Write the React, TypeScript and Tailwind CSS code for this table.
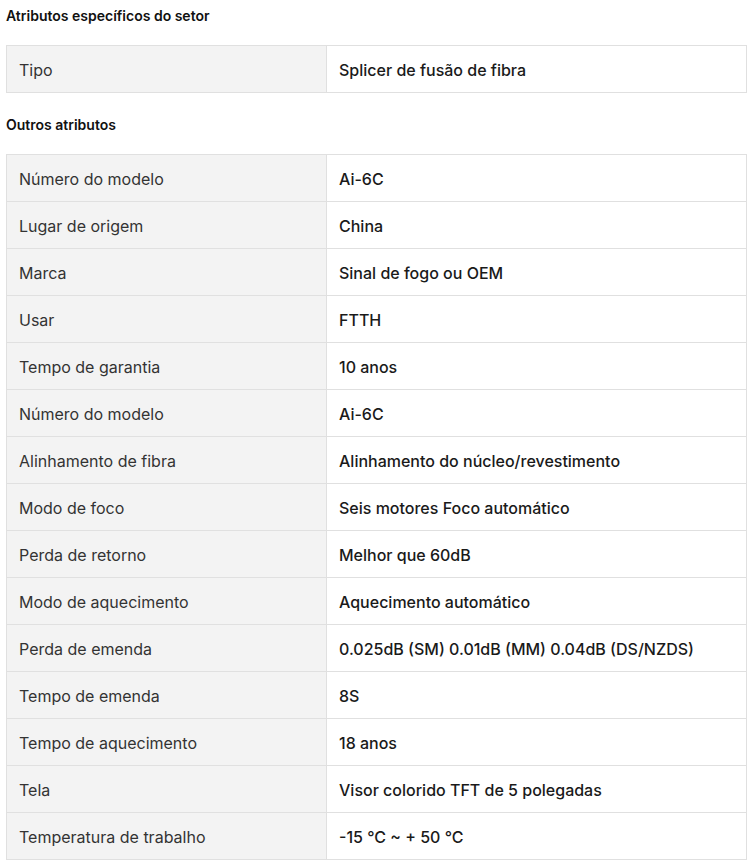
import React from "react";

const specific: [string, string][] = [["Tipo", "Splicer de fusão de fibra"]];
const others: [string, string][] = [
  ["Número do modelo", "Ai-6C"],
  ["Lugar de origem", "China"],
  ["Marca", "Sinal de fogo ou OEM"],
  ["Usar", "FTTH"],
  ["Tempo de garantia", "10 anos"],
  ["Número do modelo", "Ai-6C"],
  ["Alinhamento de fibra", "Alinhamento do núcleo/revestimento"],
  ["Modo de foco", "Seis motores Foco automático"],
  ["Perda de retorno", "Melhor que 60dB"],
  ["Modo de aquecimento", "Aquecimento automático"],
  ["Perda de emenda", "0.025dB (SM) 0.01dB (MM) 0.04dB (DS/NZDS)"],
  ["Tempo de emenda", "8S"],
  ["Tempo de aquecimento", "18 anos"],
  ["Tela", "Visor colorido TFT de 5 polegadas"],
  ["Temperatura de trabalho", "-15 °C ~ + 50 °C"],
];

function Table({ rows }: { rows: [string, string][] }) {
  return (
    <div className="w-[741px] border border-[#e0e0e0] border-b-0">
      {rows.map(([k, v], i) => (
        <div key={i} className="grid grid-cols-[320px_1fr] h-[47px] border-b border-[#e0e0e0]">
          <div className="bg-[#f3f3f3] border-r border-[#e0e0e0] flex items-center pl-[12px] pt-[1px] text-[16px] text-[#333]">
            {k}
          </div>
          <div className="bg-white flex items-center pl-[12px] pt-[1px] text-[16px] font-medium text-[#1a1a1a]">{v}</div>
        </div>
      ))}
    </div>
  );
}

export default function App() {
  return (
    <div className="pl-[6px] bg-white min-h-[865px]" style={{ fontFamily: "Inter, 'Noto Sans', sans-serif" }}>
      <div className="h-[30px] flex items-center text-[14px] font-semibold text-[#111]">Atributos específicos do setor</div>
      <div className="mt-[15px]">
        <Table rows={specific} />
      </div>
      <div className="mt-[16px] h-[30px] flex items-center text-[14px] font-semibold text-[#111]">Outros atributos</div>
      <div className="mt-[15px]">
        <Table rows={others} />
      </div>
    </div>
  );
}
